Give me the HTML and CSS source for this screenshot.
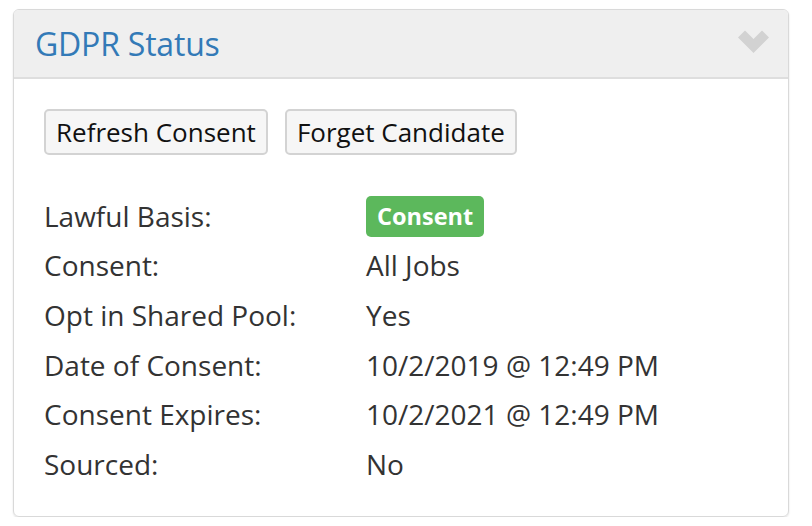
FILE: index.html
```html
<!DOCTYPE html>
<html>
<head>
<meta charset="utf-8">
<link rel="stylesheet" href="styles.css">
</head>
<body>
<div class="panel">
  <div class="panel-head">
    <h2 class="title">GDPR Status</h2>
    <svg class="chev" width="31" height="23" viewBox="0 0 31 23"><path d="M0 7.5 L7 0.5 L15.5 9 L24 0.5 L31 7.5 L15.5 23 Z" fill="#d2d2d2"/></svg>
  </div>
  <div class="panel-body">
    <div class="actions">
      <button class="btn">Refresh Consent</button>
      <button class="btn">Forget Candidate</button>
    </div>
    <div class="rows">
      <div class="row"><span class="lbl">Lawful Basis:</span><span class="val"><span class="badge">Consent</span></span></div>
      <div class="row"><span class="lbl">Consent:</span><span class="val">All Jobs</span></div>
      <div class="row"><span class="lbl">Opt in Shared Pool:</span><span class="val">Yes</span></div>
      <div class="row"><span class="lbl">Date of Consent:</span><span class="val">10/2/2019 @ 12:49 PM</span></div>
      <div class="row"><span class="lbl">Consent Expires:</span><span class="val">10/2/2021 @ 12:49 PM</span></div>
      <div class="row"><span class="lbl">Sourced:</span><span class="val">No</span></div>
    </div>
  </div>
</div>
</body>
</html>
```
FILE: styles.css
```css
html, body {
  margin: 0;
  padding: 0;
  background: #fff;
  font-family: "Open Sans", "Noto Sans", sans-serif;
  color: #333;
}
.panel {
  margin: 9px 0 0 13px;
  width: 774px;
  height: 506px;
  border: 1px solid #d9d9d9;
  border-radius: 6px;
  box-shadow: 0 1px 2px rgba(0,0,0,0.12);
  overflow: hidden;
  display: flex;
  flex-direction: column;
}
.panel-head {
  height: 69px;
  background: #efefef;
  border-bottom: 2px solid #dedede;
  display: flex;
  align-items: center;
  justify-content: space-between;
  padding: 0 19px 0 21px;
  box-sizing: border-box;
}
.title {
  margin: 0;
  font-weight: 400;
  font-size: 32px;
  color: #337ab7;
  letter-spacing: -0.2px;
}
.chev {
  display: block;
  margin-top: -4px;
}
.panel-body {
  padding: 30px 30px 0 30px;
}
.actions {
  display: flex;
  gap: 17px;
}
.btn {
  font-family: "Open Sans", "Noto Sans", sans-serif;
  font-size: 26px;
  color: #111;
  background: #f6f6f6;
  border: 2px solid #d3d3d3;
  border-radius: 5px;
  height: 46px;
  padding: 0 10px;
  line-height: 1;
}
.rows {
  margin-top: 36px;
  display: flex;
  flex-direction: column;
}
.row {
  display: flex;
  align-items: center;
  height: 49.6px;
  font-size: 28px;
}
.lbl {
  width: 322px;
  flex: none;
}
.badge {
  display: inline-block;
  background: #5cb85c;
  color: #fff;
  font-weight: 700;
  font-size: 23.5px;
  border-radius: 5px;
  padding: 0 11px;
  height: 41px;
  line-height: 41px;
}
```
